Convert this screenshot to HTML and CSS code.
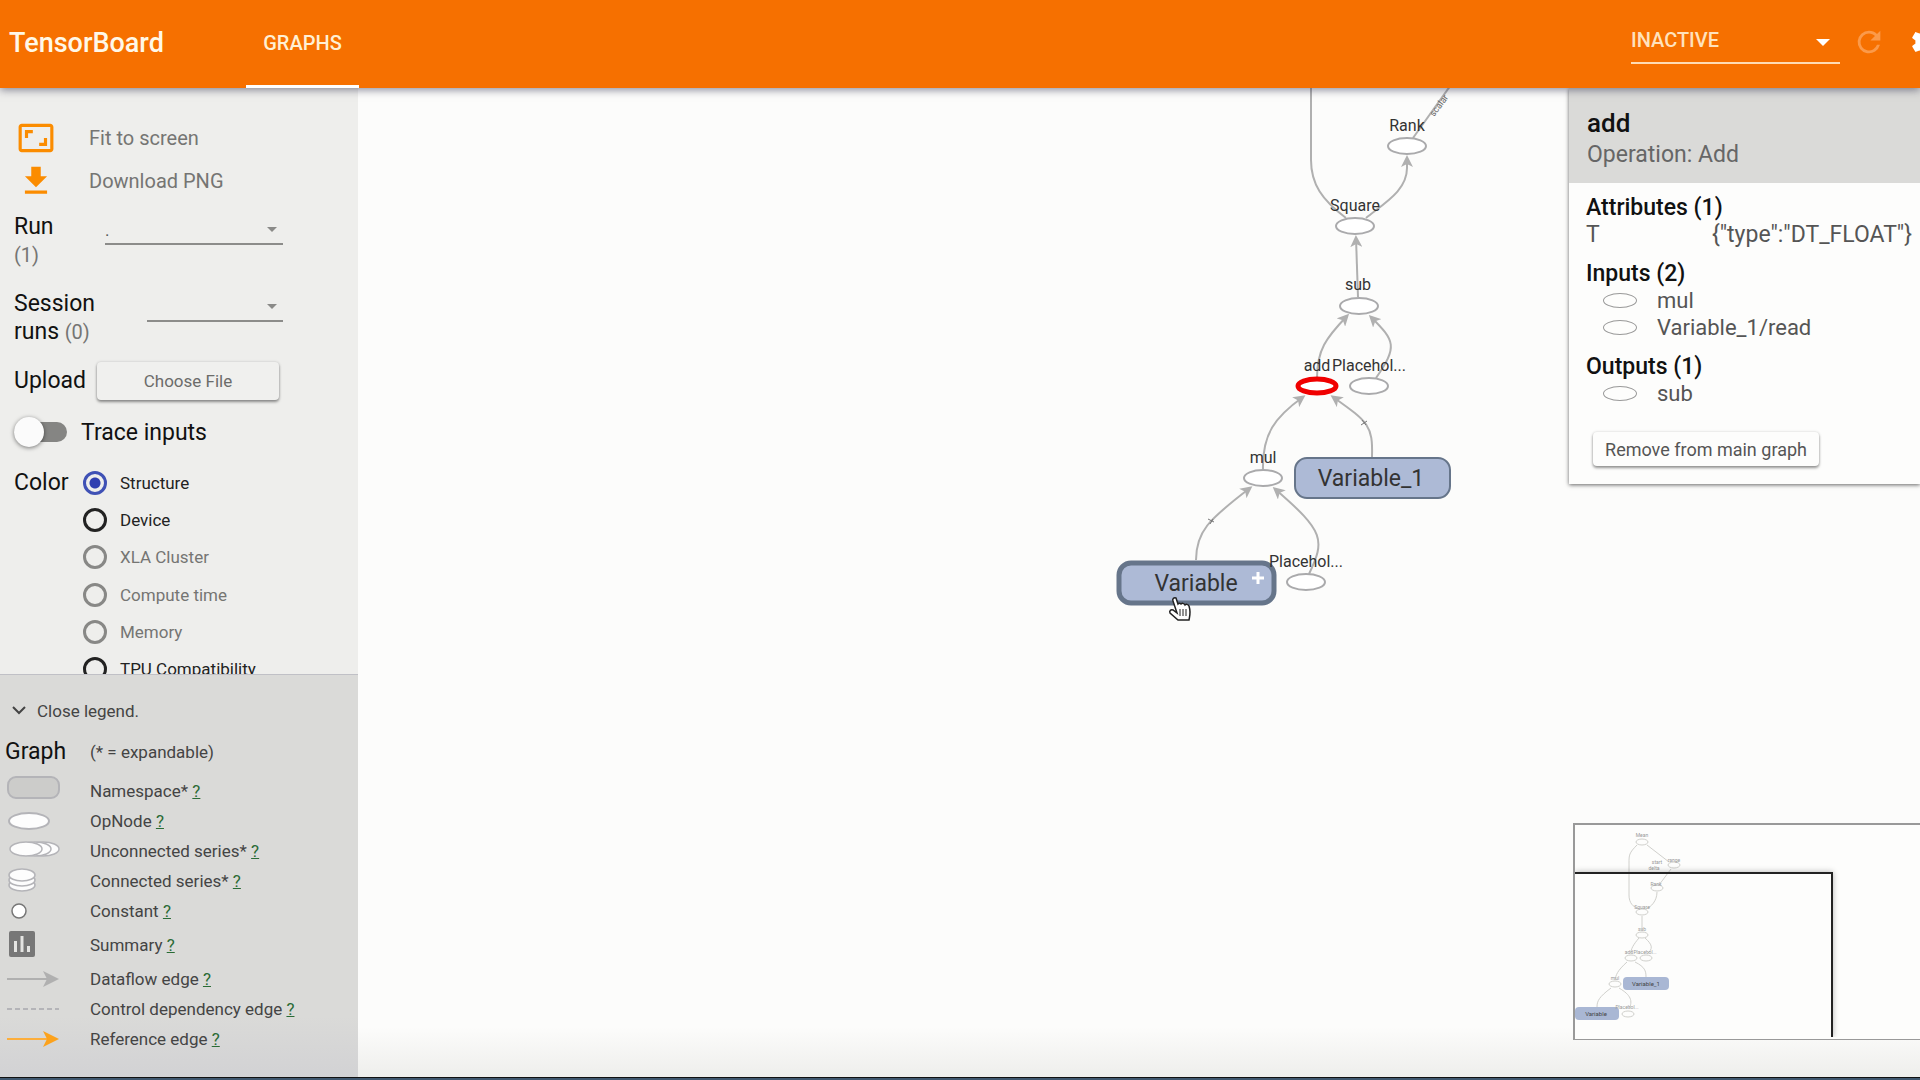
FILE: index.html
```html
<!DOCTYPE html>
<html lang="en">
<head>
<meta charset="utf-8">
<title>TensorBoard</title>
<link rel="stylesheet" href="styles.css">
</head>
<body>
<div class="app">
  <header class="toolbar">
    <h1 class="brand">TensorBoard</h1>
    <nav class="tabs"><a class="tab" href="#graphs">GRAPHS</a></nav>
    <div class="toolbar-actions">
      <div class="status">
        <select class="status-select" aria-label="Plugin status"><option>INACTIVE</option></select>
      </div>
      <button class="icon-button faded" aria-label="Reload" type="button">
        <svg width="34" height="34" viewBox="0 0 24 24" fill="currentColor"><path d="M17.65 6.35A7.96 7.96 0 0 0 12 4a8 8 0 1 0 7.73 10h-2.08A6 6 0 1 1 12 6c1.66 0 3.14.69 4.22 1.78L13 11h7V4z"/></svg>
      </button>
      <button class="icon-button" aria-label="Settings" type="button">
        <svg width="34" height="34" viewBox="0 0 24 24" fill="currentColor"><path d="M19.43 12.98c.04-.32.07-.64.07-.98s-.03-.66-.07-.98l2.11-1.65c.19-.15.24-.42.12-.64l-2-3.46c-.12-.22-.39-.3-.61-.22l-2.49 1c-.52-.4-1.08-.73-1.69-.98l-.38-2.65A.49.49 0 0 0 14 2h-4c-.25 0-.46.18-.49.42l-.38 2.65c-.61.25-1.17.59-1.69.98l-2.49-1c-.23-.09-.49 0-.61.22l-2 3.46c-.13.22-.07.49.12.64l2.11 1.65c-.04.32-.07.65-.07.98s.03.66.07.98l-2.11 1.65c-.19.15-.24.42-.12.64l2 3.46c.12.22.39.3.61.22l2.49-1c.52.4 1.08.73 1.69.98l.38 2.65c.03.24.24.42.49.42h4c.25 0 .46-.18.49-.42l.38-2.65c.61-.25 1.17-.59 1.69-.98l2.49 1c.23.09.49 0 .61-.22l2-3.46c.12-.22.07-.49-.12-.64zM12 15.5a3.5 3.5 0 1 1 0-7 3.5 3.5 0 0 1 0 7z"/></svg>
      </button>
    </div>
  </header>

  <div class="workspace">
    <aside class="sidebar">
      <div class="controls">
        <button class="action" type="button">
          <svg class="action-icon" width="38" height="38" viewBox="0 0 24 24" fill="currentColor"><path d="M19 12h-2v3h-3v2h5zM7 9h3V7H5v5h2zm14-6H3c-1.1 0-2 .9-2 2v14c0 1.1.9 2 2 2h18c1.1 0 2-.9 2-2V5c0-1.1-.9-2-2-2zm0 16.010H3V4.990h18z"/></svg>
          <span>Fit to screen</span>
        </button>
        <button class="action" type="button">
          <svg class="action-icon" width="38" height="38" viewBox="0 0 24 24" fill="currentColor"><path d="M19 9h-4V3H9v6H5l7 7zM5 18v2h14v-2z"/></svg>
          <span>Download PNG</span>
        </button>

        <div class="fields">
          <div class="field">
            <div class="field-label">
              <label for="run">Run</label>
              <div class="count">(1)</div>
            </div>
            <div class="dropdown"><select id="run"><option>.</option></select></div>
          </div>
          <div class="field">
            <label class="field-label" for="session">Session runs <span class="count">(0)</span></label>
            <div class="dropdown narrow"><select id="session"><option></option></select></div>
          </div>
        </div>

        <div class="upload">
          <span class="field-label">Upload</span>
          <button class="raised choose" type="button">Choose File</button>
        </div>

        <label class="trace"><input class="toggle" type="checkbox"><span>Trace inputs</span></label>

        <fieldset class="color">
          <legend class="field-label">Color</legend>
          <div class="radios">
            <label class="radio"><input type="radio" name="color" checked>Structure</label>
            <label class="radio"><input type="radio" name="color">Device</label>
            <label class="radio"><input type="radio" name="color" disabled>XLA Cluster</label>
            <label class="radio"><input type="radio" name="color" disabled>Compute time</label>
            <label class="radio"><input type="radio" name="color" disabled>Memory</label>
            <label class="radio"><input type="radio" name="color">TPU Compatibility</label>
          </div>
        </fieldset>
      </div>

      <section class="legend">
        <button class="legend-toggle" type="button">
          <svg width="14" height="10" viewBox="0 0 14 10" fill="none" stroke="#444" stroke-width="2"><path d="M1 1l6 6 6-6"/></svg>
          Close legend.
        </button>
        <div class="legend-row head"><h2>Graph</h2><span>(* = expandable)</span></div>
        <div class="legend-row">
          <svg class="key" width="54" height="30"><rect x="1" y="1" width="51" height="21" rx="8" fill="#ccccca" stroke="#b4b4b8" stroke-width="2"/></svg>
          <span>Namespace* <a href="#namespace">?</a></span>
        </div>
        <div class="legend-row">
          <svg class="key" width="54" height="30"><ellipse cx="22" cy="15" rx="20" ry="8" fill="#fdfdfd" stroke="#b4b4b8" stroke-width="2"/></svg>
          <span>OpNode <a href="#opnode">?</a></span>
        </div>
        <div class="legend-row">
          <svg class="key" width="54" height="30" fill="#fdfdfd" stroke="#b4b4b8" stroke-width="1.500"><ellipse cx="36" cy="13" rx="16" ry="7"/><ellipse cx="28" cy="13" rx="16" ry="7"/><ellipse cx="19" cy="13" rx="16" ry="7"/></svg>
          <span>Unconnected series* <a href="#unconnected">?</a></span>
        </div>
        <div class="legend-row">
          <svg class="key" width="54" height="30" fill="#fdfdfd" stroke="#b4b4b8" stroke-width="1.500"><ellipse cx="15" cy="19" rx="13" ry="6"/><ellipse cx="15" cy="14" rx="13" ry="6"/><ellipse cx="15" cy="9" rx="13" ry="6"/></svg>
          <span>Connected series* <a href="#connected">?</a></span>
        </div>
        <div class="legend-row">
          <svg class="key" width="54" height="30"><circle cx="12" cy="15" r="7" fill="#fff" stroke="#777" stroke-width="1.500"/></svg>
          <span>Constant <a href="#constant">?</a></span>
        </div>
        <div class="legend-row tall">
          <svg class="key" width="54" height="38"><rect x="2" y="5" width="26" height="26" rx="2" fill="#777"/><path d="M7 15h3v11H7zM13.500 10h3v16h-3zM20 20h3v6h-3z" fill="#e4e4e2"/></svg>
          <span>Summary <a href="#summary">?</a></span>
        </div>
        <div class="legend-row">
          <svg class="key" width="54" height="30"><path d="M0 15h42" stroke="#b0b0b0" stroke-width="2"/><path d="M36 7l16 8-16 8 4-8z" fill="#b0b0b0"/></svg>
          <span>Dataflow edge <a href="#dataflow">?</a></span>
        </div>
        <div class="legend-row">
          <svg class="key" width="54" height="30"><path d="M0 15h52" stroke="#b4b4b8" stroke-width="2" stroke-dasharray="5 3"/></svg>
          <span>Control dependency edge <a href="#control">?</a></span>
        </div>
        <div class="legend-row">
          <svg class="key" width="54" height="30"><path d="M0 15h42" stroke="#fcae3c" stroke-width="2"/><path d="M36 7l16 8-16 8 4-8z" fill="#fca21c"/></svg>
          <span>Reference edge <a href="#reference">?</a></span>
        </div>
      </section>
    </aside>

    <main class="canvas">
      <svg class="graph" width="100%" height="100%">
        <defs>
          <marker id="arrow" markerUnits="userSpaceOnUse" markerWidth="13" markerHeight="12" refX="9" refY="6" orient="auto"><path d="M0 0l12 6-12 6 3-6z" fill="#b0b0b0"/></marker>
        </defs>
        <g transform="translate(-358 -88)">
          <g class="edges">
            <path d="M1346 218C1322 200 1311 184 1311 160V80"/>
            <path d="M1366 218C1386 202 1407 190 1407 168V158" marker-end="url(#arrow)"/>
            <path d="M1413 138L1453 82"/>
            <path d="M1358 297L1356 238" marker-end="url(#arrow)"/>
            <path d="M1317 378C1317 350 1326 338 1347 316" marker-end="url(#arrow)"/>
            <path d="M1376 378C1398 346 1395 341 1371 317" marker-end="url(#arrow)"/>
            <path d="M1263 470C1262 434 1275 417 1303 397" marker-end="url(#arrow)"/>
            <path d="M1372 457C1373 425 1368 422 1333 397" marker-end="url(#arrow)"/>
            <path d="M1196 560C1196 532 1208 520 1250 488" marker-end="url(#arrow)"/>
            <path d="M1309 574C1325 540 1325 532 1275 489" marker-end="url(#arrow)"/>
            <path class="tick" d="M1361 425l6-4M1362 420l4 5M1208 519l6 3M1213 519l-3 5"/>
          </g>
          <g class="ops">
            <ellipse cx="1407" cy="146" rx="19" ry="8"/>
            <ellipse cx="1355" cy="226" rx="19" ry="8"/>
            <ellipse cx="1359" cy="306" rx="19" ry="8"/>
            <ellipse cx="1369" cy="386" rx="19" ry="8"/>
            <ellipse cx="1263" cy="478" rx="19" ry="8"/>
            <ellipse cx="1306" cy="582" rx="19" ry="8"/>
            <ellipse class="selected" cx="1317" cy="386" rx="19" ry="7"/>
          </g>
          <rect class="scope" x="1295" y="458" width="155" height="40" rx="12"/>
          <rect class="scope hovered" x="1119" y="563" width="155" height="40" rx="12"/>
          <path d="M1252 578h12M1258 572v12" stroke="#fff" stroke-width="3"/>
          <g class="scope-names">
            <text x="1371" y="486">Variable_1</text>
            <text x="1196" y="591">Variable</text>
          </g>
          <g class="op-names">
            <text x="1407" y="131">Rank</text>
            <text x="1355" y="211">Square</text>
            <text x="1358" y="290">sub</text>
            <text x="1317" y="371">add</text>
            <text x="1369" y="371">Placehol...</text>
            <text x="1263" y="463">mul</text>
            <text x="1306" y="567">Placehol...</text>
          </g>
          <text class="edge-name" transform="translate(1434 117) rotate(-53)">scalar</text>
          <path d="M1176 598c-2-1-4 1-3 3l4 12-4-3c-2-1-4 1-3 3l8 7h11c1-5 2-8 0-14-1-2-3-2-4-1-1-2-3-2-4-1-1-1-2-1-3 0z" fill="#fff" stroke="#222" stroke-width="1.500"/>
          <path d="M1180 609v7M1183 609v7M1186 609v7" stroke="#222" stroke-width="1"/>
        </g>
      </svg>

      <aside class="info">
        <div class="info-head">
          <h2>add</h2>
          <p>Operation: Add</p>
        </div>
        <div class="info-body">
          <h3>Attributes (1)</h3>
          <div class="attribute"><span>T</span><span>{"type":"DT_FLOAT"}</span></div>
          <h3>Inputs (2)</h3>
          <ul>
            <li><span class="op-mark"></span>mul</li>
            <li><span class="op-mark"></span>Variable_1/read</li>
          </ul>
          <h3>Outputs (1)</h3>
          <ul><li><span class="op-mark"></span>sub</li></ul>
          <button class="raised remove" type="button">Remove from main graph</button>
        </div>
      </aside>

      <div class="minimap">
        <svg width="345" height="215">
          <g fill="none" stroke="#d0d0cc">
            <path d="M62 20C54 28 54 30 54 38V70C54 78 58 82 64 84M72 20L94 37M96 44L84 60M82 67C82 76 76 82 71 84M67 91V105M64 113C58 120 56 124 56 128M70 113C78 120 78 124 72 129M52 137C42 146 41 150 40 155M60 137C70 142 71 146 71 152M36 163C24 172 22 176 22 182M44 163C56 170 58 176 54 184"/>
            <ellipse cx="67" cy="17" rx="6" ry="3"/><ellipse cx="99" cy="40" rx="6" ry="3"/><ellipse cx="82" cy="63" rx="6" ry="3"/><ellipse cx="67" cy="87" rx="6" ry="3"/><ellipse cx="67" cy="110" rx="6" ry="3"/><ellipse cx="56" cy="133" rx="6" ry="3"/><ellipse cx="71" cy="133" rx="6" ry="3"/><ellipse cx="40" cy="159" rx="6" ry="3"/><ellipse cx="53" cy="189" rx="6" ry="3"/>
          </g>
          <rect x="48" y="152" width="46" height="13" rx="4" fill="#a9b7d4"/>
          <rect x="0" y="182" width="44" height="13" rx="4" fill="#a9b7d4"/>
          <g class="mini-names">
            <text x="67" y="12">Mean</text><text x="99" y="37">range</text><text x="82" y="39">start</text><text x="79" y="45">delta</text><text x="81" y="61">Rank</text><text x="67" y="84">Square</text><text x="67" y="106">sub</text><text x="54" y="129">add</text><text x="70" y="129">Placehol...</text><text x="40" y="155">mul</text><text x="52" y="184">Placehol...</text>
          </g>
          <g class="mini-scopes"><text x="71" y="161">Variable_1</text><text x="21" y="191">Variable</text></g>
        </svg>
        <div class="viewpoint"></div>
      </div>
    </main>
  </div>
  <footer class="dock"></footer>
</div>
</body>
</html>
```
FILE: styles.css
```css
* { box-sizing: border-box; }
body { margin: 0; font-family: Roboto, "Liberation Sans", sans-serif; color: #222; }
h1, h2, h3, p, ul { margin: 0; padding: 0; font-weight: 500; }
button, select { font: inherit; color: inherit; background: none; border: 0; padding: 0; }
select { appearance: none; width: 100%; border-radius: 0; }

.app { display: flex; flex-direction: column; height: 100vh; overflow: hidden; }

/* Toolbar */
.toolbar { position: relative; z-index: 3; display: flex; align-items: stretch; height: 88px; flex: none; overflow-x: clip; background: #f67000; color: #fff8e8; box-shadow: 0 2px 8px rgba(30, 30, 60, .5); }
.brand { width: 246px; padding-left: 9px; font-size: 27px; line-height: 86px; }
.tab { display: block; width: 113px; height: 88px; border-bottom: 3px solid #fff; font-size: 20px; font-weight: 500; line-height: 86px; text-align: center; color: #fff0d4; text-decoration: none; }
.toolbar-actions { display: flex; align-items: center; margin: 0 -23px 4px auto; }
.status { position: relative; width: 209px; height: 44px; margin-right: 12px; border-bottom: 2px solid #ffdcb4; }
.status-select { height: 40px; font-size: 20px; font-weight: 500; color: #ffe2bd; }
.status::after { content: ""; position: absolute; right: 10px; top: 19px; border: 7px solid transparent; border-top-color: #fff; border-bottom: 0; }
.icon-button { display: flex; color: #fff; }
.icon-button.faded { color: #fb9a4a; margin-right: 23px; }

.workspace { display: flex; flex: 1; min-height: 0; }

/* Sidebar */
.sidebar { display: flex; flex-direction: column; width: 358px; flex: none; background: #eeeeec; }
.controls { flex: 1; min-height: 0; overflow: hidden; padding: 28px 15px 0 14px; }
.action { display: flex; align-items: center; height: 43px; gap: 34px; padding-left: 3px; font-size: 20px; color: #757573; }
.action-icon { color: #fb8c00; }
.fields { padding-top: 7px; }
.field { display: flex; justify-content: space-between; height: 77px; padding: 4px 60px 0 0; }
.field-label { font-size: 23px; line-height: 28px; color: #111; padding: 0; width: 90px; }
.count { font-size: 20px; color: #757573; }
.dropdown { position: relative; width: 178px; height: 27px; margin-top: 5px; border-bottom: 2px solid #8c8c8a; }
.dropdown.narrow { width: 136px; }
.dropdown select { height: 24px; font-size: 17px; color: #555; }
.dropdown::after { content: ""; position: absolute; right: 6px; top: 9px; border: 5px solid transparent; border-top-color: #8a8a88; border-bottom: 0; }
.upload { display: flex; align-items: center; height: 46px; margin-top: -5px; }
.upload .field-label { width: 83px; }
.raised { border-radius: 4px; box-shadow: 0 2px 3px rgba(0, 0, 0, .4), 0 0 3px rgba(0, 0, 0, .15); text-align: center; }
.choose { width: 182px; height: 38px; font-size: 17px; color: #6c6c6a; background: #f0f0ee; }
.trace { display: flex; align-items: center; gap: 14px; height: 50px; margin-top: 3px; font-size: 23px; color: #111; }
.toggle { appearance: none; position: relative; width: 53px; height: 20px; margin: 0; border-radius: 10px; background: #858583; }
.toggle::before { content: ""; position: absolute; left: 0; top: -5px; width: 30px; height: 30px; border-radius: 50%; background: #fbfbfb; box-shadow: 0 1px 4px rgba(0, 0, 0, .5); }
.color { display: flex; margin: 7px 0 0; padding: 0; border: 0; }
.color legend { float: left; width: 69px; height: 37px; line-height: 38px; }
.radios { display: flex; flex-direction: column; justify-content: space-between; height: 224px; }
.radio { display: flex; align-items: center; gap: 13px; height: 37px; font-size: 17px; }
.radio input { appearance: none; width: 24px; height: 24px; margin: 0; border: 3px solid #222; border-radius: 50%; }
.radio input:checked { border-color: #3f51b5; background: radial-gradient(circle, #303fb0 5px, transparent 6px); }
.radio:has(:disabled) { color: #757573; }
.radio input:disabled { border-color: #888886; }

/* Legend */
.legend { position: relative; flex: none; padding: 15px 5px 23px; border-top: 1px solid #c0c0c6; background: linear-gradient(#dadad8 85%, #d2d2d4); font-size: 17px; color: #444; }
.legend-toggle { display: flex; align-items: center; gap: 11px; height: 42px; padding-left: 7px; }
.legend-row { display: flex; align-items: center; height: 30px; padding-left: 2px; }
.legend-row .key { flex: none; margin-right: 29px; }
.legend-row.head { height: 44px; padding: 0 0 5px; }
.legend-row.head h2 { width: 85px; font-size: 23px; font-weight: 400; color: #111; }
.legend-row.tall { height: 38px; }
.legend a { color: #2a6b35; }

/* Graph canvas */
.canvas { position: relative; flex: 1; min-width: 0; overflow: hidden; background: linear-gradient(to top, #eeeeec, #fcfcfb 50px); }
.graph { display: block; }
.edges { fill: none; stroke: #b0b0b0; stroke-width: 2; }
.edges .tick { stroke: #777; stroke-width: 1; }
.ops { fill: #fff; stroke: #aaaaac; stroke-width: 2; }
.ops .selected { stroke: #f00000; stroke-width: 5; }
.scope { fill: #adbad6; stroke: #66758a; stroke-width: 2; }
.scope.hovered { stroke-width: 5; }
.scope-names { font-size: 23px; fill: #333; text-anchor: middle; }
.op-names { font-size: 16px; fill: #333; text-anchor: middle; }
.edge-name { font-size: 9px; fill: #666; }

/* Node details */
.info { position: absolute; top: 0; right: 0; width: 351px; background: #fdfdfc; box-shadow: 0 1px 4px rgba(0, 0, 0, .6); color: #555; }
.info-head { height: 95px; padding: 20px 18px 0; background: #dadad8; line-height: 31px; font-size: 23px; }
.info-head h2 { font-size: 26px; color: #111; }
.info-head p { font-weight: 400; color: #666; }
.info-body { padding: 11px 8px 18px 17px; font-size: 22px; line-height: 27px; }
.info-body h3 { font-size: 23px; color: #111; }
.info-body .attribute { display: flex; justify-content: space-between; margin-bottom: 12px; font-size: 23px; }
.info-body ul { list-style: none; margin-bottom: 12px; }
.info-body li { display: flex; align-items: center; font-weight: 400; padding-left: 17px; gap: 20px; }
.op-mark { width: 34px; height: 15px; border: 1px solid #999; border-radius: 50%; }
.remove { width: 226px; height: 34px; margin: 13px 0 0 7px; font-size: 18px; }

/* Minimap */
.minimap { position: absolute; right: 0; bottom: 37px; width: 347px; height: 217px; overflow: hidden; border: 1px solid #999; border-width: 2px 0 1px 2px; background: #fdfdfc; }
.mini-names { font-size: 5px; fill: #999; text-anchor: middle; }
.mini-scopes { font-size: 6px; fill: #444; text-anchor: middle; }
.viewpoint { position: absolute; left: 0; top: 47px; width: 258px; height: 165px; border: 2px solid #222; border-width: 2px 2px 0 0; box-shadow: 0 0 6px rgba(0, 0, 0, .3); clip-path: inset(-10px -10px 0 0); }

.dock { flex: none; height: 3px; border-top: 1px solid #111; background: #405870; }
```
